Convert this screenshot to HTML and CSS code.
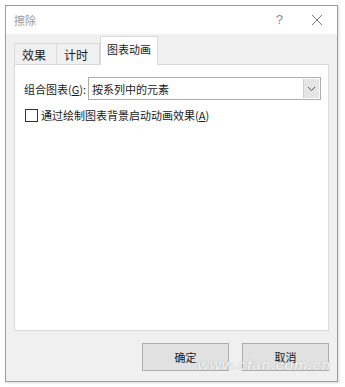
FILE: index.html
```html
<!DOCTYPE html>
<html lang="zh-CN">
<head>
    <meta charset="UTF-8">
    <title>擦除</title>
    <link rel="stylesheet" href="styles.css">
</head>
<body>
    <div class="dialog">
        <div class="titlebar">
            <span class="title">擦除</span>
            <span class="help">?</span>
            <svg class="close" width="12" height="12" viewBox="0 0 12 12">
                <path d="M1 1 L11 11 M11 1 L1 11" stroke="#7a7a7a" stroke-width="1" fill="none"/>
            </svg>
        </div>
        <div class="content">
            <div class="tabs">
                <div class="tab">效果</div>
                <div class="tab">计时</div>
                <div class="tab active">图表动画</div>
            </div>
            <div class="panel">
                <div class="row">
                    <label class="label">组合图表(<u>G</u>):</label>
                    <div class="combo">
                        <span class="combo-text">按系列中的元素</span>
                        <span class="combo-btn">
                            <svg width="9" height="6" viewBox="0 0 9 6">
                                <path d="M1 1 L4.5 4.5 L8 1" stroke="#555" stroke-width="1" fill="none"/>
                            </svg>
                        </span>
                    </div>
                </div>
                <div class="check-row">
                    <span class="checkbox"></span>
                    <span>通过绘制图表背景启动动画效果(<u>A</u>)</span>
                </div>
            </div>
            <div class="buttons">
                <button class="btn">确定</button>
                <button class="btn">取消</button>
            </div>
            <div class="watermark">www.cfan.com.cn</div>
        </div>
    </div>
</body>
</html>
```
FILE: styles.css
```css
body {
    margin: 0;
    background: #fff;
    font-family: "Noto Sans CJK SC", "Noto Sans", sans-serif;
    font-size: 11px;
    line-height: 16px;
    color: #1a1a1a;
    white-space: nowrap;
}
.dialog {
    margin: 5px;
    width: 331px;
    height: 375px;
    border: 1px solid #9c9c9c;
    display: flex;
    flex-direction: column;
    box-shadow: 1px 1px 2px rgba(0, 0, 0, 0.15);
}
.titlebar {
    height: 28px;
    background: #fff;
    display: flex;
    align-items: center;
    padding: 0 14px 0 8px;
}
.title {
    color: #9a9a9a;
    flex: 1;
}
.help {
    color: #8a8a8a;
    font-family: "Liberation Sans", sans-serif;
    font-size: 13px;
    margin-right: 28px;
}
.content {
    flex: 1;
    background: #f0f0f0;
    padding: 2px 8px 0 8px;
    display: flex;
    flex-direction: column;
    position: relative;
}
.tabs {
    display: flex;
    align-items: flex-end;
    height: 28px;
    position: relative;
    z-index: 1;
}
.tab {
    box-sizing: border-box;
    height: 21px;
    line-height: 21px;
    border: 1px solid #d9d9d9;
    border-bottom: none;
    width: 43px;
    padding-left: 7px;
    background: #f0f0f0;
    font-size: 12px;
}
.tab + .tab {
    border-left: none;
}
.tab.active {
    height: 29px;
    line-height: 24px;
    background: #fff;
    width: 58px;
    padding-left: 0;
    text-align: center;
    margin-bottom: -1px;
    border-left: 1px solid #d9d9d9;
    font-size: 11px;
}
.panel {
    box-sizing: border-box;
    height: 267px;
    width: 315px;
    border: 1px solid #d9d9d9;
    background: #fff;
    padding-top: 12px;
}
.row {
    display: flex;
    align-items: center;
    padding: 0 7px 0 9px;
}
.label {
    flex: none;
    width: 64px;
}
.combo {
    flex: 1;
    box-sizing: border-box;
    height: 23px;
    border: 1px solid #adadad;
    display: flex;
    align-items: center;
}
.combo-text {
    flex: 1;
    padding-left: 3px;
}
.combo-btn {
    width: 15px;
    height: 19px;
    margin-right: 1px;
    background: #e5e5e5;
    border-left: 1px solid #cfcfcf;
    display: flex;
    align-items: center;
    justify-content: center;
}
.check-row {
    display: flex;
    align-items: center;
    padding-left: 10px;
    margin-top: 7px;
}
.checkbox {
    width: 11px;
    height: 11px;
    border: 1px solid #333;
    margin-right: 3px;
    background: #fff;
}
.buttons {
    display: flex;
    justify-content: flex-end;
    gap: 13px;
    margin-top: 12px;
}
.btn {
    width: 87px;
    height: 28px;
    border: 1px solid #adadad;
    background: #e1e1e1;
    font-family: "Noto Sans CJK SC", sans-serif;
    font-size: 11px;
    color: #1a1a1a;
    padding: 0;
}
.watermark {
    position: absolute;
    right: 6px;
    bottom: 8px;
    font-family: "Liberation Sans", sans-serif;
    font-style: italic;
    font-weight: bold;
    font-size: 15px;
    color: rgba(255, 255, 255, 0.85);
    text-shadow: 0 0 1px rgba(0, 0, 0, 0.35);
    letter-spacing: 0.5px;
}
```
